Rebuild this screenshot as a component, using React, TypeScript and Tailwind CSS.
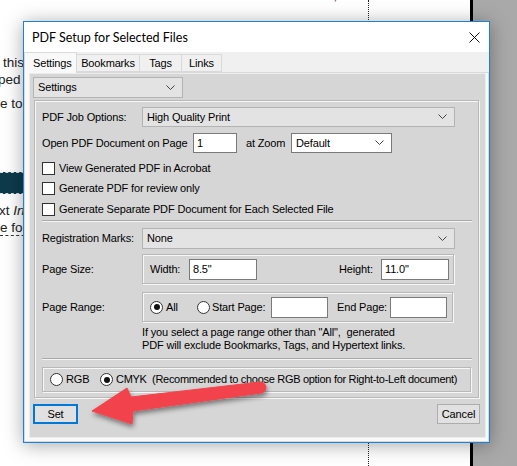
import React from 'react';

const ui = { fontFamily: '"Liberation Sans", Arial, sans-serif' };

function Chevron() {
  return (
    <svg width="9" height="6" viewBox="0 0 9 6" className="shrink-0">
      <path d="M0.5 0.5 L4.5 4.5 L8.5 0.5" fill="none" stroke="#444" strokeWidth="1" />
    </svg>
  );
}

function Combo({ text, white, className }: { text: string; white?: boolean; className: string }) {
  return (
    <div
      className={`flex items-center justify-between pl-[4px] pr-[7px] border ${
        white ? 'bg-white border-[#7a7a7a]' : 'bg-[#e3e3e3] border-[#b3b3b3]'
      } ${className}`}
    >
      <span>{text}</span>
      <Chevron />
    </div>
  );
}

function TextBox({ value, className }: { value?: string; className: string }) {
  return <div className={`bg-white border border-[#7a7a7a] pl-[3px] flex items-center ${className}`}>{value}</div>;
}

function CheckRow({ label, mt }: { label: string; mt: string }) {
  return (
    <div className={`flex items-center h-[13px] ${mt}`}>
      <div className="w-[13px] h-[13px] bg-white border border-[#333]" />
      <span className="ml-[4px]">{label}</span>
    </div>
  );
}

function Radio({ checked }: { checked?: boolean }) {
  return (
    <div className="w-[13px] h-[13px] rounded-full bg-white border border-[#333] flex items-center justify-center shrink-0">
      {checked && <div className="w-[6px] h-[6px] rounded-full bg-[#111]" />}
    </div>
  );
}

function Etched({ className, children }: { className: string; children?: React.ReactNode }) {
  return (
    <div className={`border border-[#b8b8b8] shadow-[inset_1px_1px_0_#f7f7f7,1px_1px_0_#f7f7f7] ${className}`}>
      {children}
    </div>
  );
}

function Separator({ mt }: { mt: string }) {
  return <div className={`h-[2px] border-t border-[#a9a9a9] border-b border-b-[#f4f4f4] mr-[6px] ${mt}`} />;
}

function Button({ label, focused, className }: { label: string; focused?: boolean; className: string }) {
  return (
    <div
      className={`h-[20px] flex items-center justify-center bg-[#e1e1e1] ${
        focused ? 'border-2 border-[#0078d7]' : 'border border-[#adadad]'
      } ${className}`}
    >
      {label}
    </div>
  );
}

export default function App() {
  return (
    <div className="relative w-[517px] h-[466px] overflow-hidden bg-white text-black">
      {/* document behind the dialog */}
      <div className="absolute left-[219px] top-[-14px] text-[13px] tracking-[1px] text-[#222]" style={ui}>
        FMP'S HEADING, NOTE
      </div>
      <div className="absolute left-[368px] top-0 bottom-0 border-l border-dotted border-[#222]" />
      <div className="absolute left-[470px] top-0 bottom-0 w-[3px] bg-black" />
      <div className="absolute left-[473px] top-0 bottom-0 right-0 bg-[#a9a9a9]" />

      <div className="absolute left-0 top-[54px] text-[13.5px] leading-[17px] text-[#222] whitespace-nowrap" style={ui}>
        <div className="pl-[3px]">this text</div>
        <div className="-ml-[2px]">ped in the</div>
        <div className="mt-[7px]">e to use</div>
      </div>
      <div className="absolute left-0 top-[172px] w-[30px] h-[22px] bg-[#0e3b4c] border-y border-dashed border-[#ddd]" />
      <div className="absolute left-0 top-[202px] text-[13.5px] leading-[17px] text-[#222] whitespace-nowrap" style={ui}>
        <div className="-ml-[1px]">
          xt <i>In</i>
        </div>
        <div>e for the</div>
      </div>
      <div className="absolute left-0 top-[235px] w-[30px] border-t border-dashed border-[#333]" />

      {/* dialog */}
      <div
        className="absolute left-[23px] top-[21px] w-[467px] h-[422px] border border-[#1883d7] bg-[#f0f0f0] shadow-[0_2px_18px_rgba(0,0,0,0.35)] flex flex-col text-[11px] leading-[13px] tracking-[-0.15px] whitespace-nowrap"
        style={ui}
      >
        <div className="h-[30px] bg-white flex items-center justify-between pl-[8px] pr-[9px] shrink-0 tracking-normal">
          <span className="text-[12.5px]" style={{ fontFamily: '"Lato", "Noto Sans", sans-serif' }}>
            PDF Setup for Selected Files
          </span>
          <svg width="11" height="11" viewBox="0 0 11 11">
            <path d="M0.5 0.5 L10.5 10.5 M10.5 0.5 L0.5 10.5" stroke="#111" strokeWidth="1" />
          </svg>
        </div>

        <div className="flex items-end h-[20px] shrink-0 relative z-10">
          <div className="h-[21px] w-[53px] bg-[#f9f9f9] border border-b-0 border-[#d9d9d9] flex items-center pl-[8px] mb-[-1px]">
            Settings
          </div>
          <div className="h-[18px] w-[63px] bg-[#f0f0f0] border border-l-0 border-[#d9d9d9] flex items-center justify-center">
            Bookmarks
          </div>
          <div className="h-[18px] w-[42px] bg-[#f0f0f0] border border-l-0 border-[#d9d9d9] flex items-center justify-center">
            Tags
          </div>
          <div className="h-[18px] w-[40px] bg-[#f0f0f0] border border-l-0 border-[#d9d9d9] flex items-center justify-center">
            Links
          </div>
        </div>

        <div className="flex-1 bg-[#f9f9f9] border border-[#d9d9d9] pl-[4px] pr-[2px] pb-[3px] flex flex-col">
          <div className="flex-1 bg-[#d6d6d6] border border-[#ececec] flex flex-col">
            <Combo text="Settings" className="ml-[3px] mt-[3px] w-[150px] h-[21px]" />

            <Etched className="ml-[4px] mt-[2px] w-[445px] h-[298px] pl-[7px] flex flex-col">
              <div className="flex items-center mt-[6px]">
                <span className="w-[100px]">PDF Job Options:</span>
                <Combo text="High Quality Print" className="w-[313px] h-[20px]" />
              </div>
              <div className="flex items-center mt-[6px] h-[20px]">
                <span className="w-[151px]">Open PDF Document on Page</span>
                <TextBox value="1" className="w-[44px] h-[20px]" />
                <span className="ml-[9px] w-[45px]">at Zoom</span>
                <Combo text="Default" white className="w-[101px] h-[20px]" />
              </div>
              <CheckRow label="View Generated PDF in Acrobat" mt="mt-[9px]" />
              <CheckRow label="Generate PDF for review only" mt="mt-[7px]" />
              <CheckRow label="Generate Separate PDF Document for Each Selected File" mt="mt-[8px]" />
              <Separator mt="mt-[4px]" />

              <div className="flex items-center mt-[6px]">
                <span className="w-[100px]">Registration Marks:</span>
                <Combo text="None" className="w-[313px] h-[21px]" />
              </div>

              <div className="flex items-center mt-[5px]">
                <span className="w-[100px]">Page Size:</span>
                <Etched className="w-[312px] h-[30px] pl-[7px] pr-[4px] flex items-center">
                  <span className="w-[39px]">Width:</span>
                  <TextBox value={'8.5"'} className="w-[68px] h-[21px]" />
                  <span className="ml-auto w-[42px]">Height:</span>
                  <TextBox value={'11.0"'} className="w-[68px] h-[21px]" />
                </Etched>
              </div>

              <div className="flex items-center mt-[8px]">
                <span className="w-[100px]">Page Range:</span>
                <Etched className="w-[311px] h-[30px] pl-[7px] flex items-center">
                  <Radio checked />
                  <span className="ml-[3px] w-[31px]">All</span>
                  <Radio />
                  <span className="ml-[2px] w-[59px]">Start Page:</span>
                  <TextBox className="w-[57px] h-[21px]" />
                  <span className="ml-[9px] w-[53px]">End Page:</span>
                  <TextBox className="w-[57px] h-[21px]" />
                </Etched>
              </div>

              <div className="ml-[100px] mt-[4px]">
                <div>If you select a page range other than "All",&nbsp; generated</div>
                <div>PDF will exclude Bookmarks, Tags, and Hypertext links.</div>
              </div>
              <Separator mt="mt-[6px]" />

              <Etched className="mt-[7px] w-[429px] h-[25px] pl-[7px] flex items-center">
                <Radio />
                <span className="ml-[3px] w-[34px]">RGB</span>
                <Radio checked />
                <span className="ml-[3px] tracking-[-0.3px]">
                  CMYK&nbsp; (Recommended to choose RGB option for Right-to-Left document)
                </span>
              </Etched>
            </Etched>

            <div className="flex justify-between mt-[6px] pl-[3px] pr-[5px]">
              <Button label="Set" focused className="w-[45px]" />
              <Button label="Cancel" className="w-[43px]" />
            </div>
          </div>
        </div>
      </div>

      {/* red annotation arrow */}
      <svg className="absolute inset-0 pointer-events-none" width="517" height="466" viewBox="0 0 517 466">
        <defs>
          <filter id="sh" x="-20%" y="-50%" width="140%" height="200%">
            <feDropShadow dx="1" dy="3" stdDeviation="2.5" floodColor="#000" floodOpacity="0.45" />
          </filter>
        </defs>
        <path
          d="M92 411 L127 388 L131 397 L260 382 A5.5 5.5 0 0 1 261 393 L133 411 L132 424 Z"
          fill="#f2434b"
          stroke="#f2434b"
          strokeWidth="1"
          strokeLinejoin="round"
          filter="url(#sh)"
        />
      </svg>
    </div>
  );
}
